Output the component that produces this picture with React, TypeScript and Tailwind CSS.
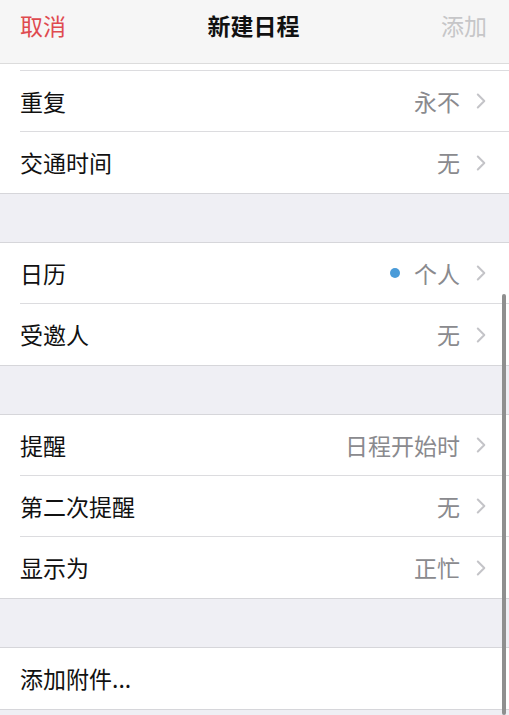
import React from "react";

const font = { fontFamily: '"Noto Sans CJK SC", "Noto Sans", sans-serif' };

function Chevron() {
  return (
    <svg width="10" height="16" viewBox="0 0 10 16" className="ml-[16px] shrink-0">
      <path d="M1.8 1.5 L8.3 8 L1.8 14.5" fill="none" stroke="#c4c4c8" strokeWidth="2" strokeLinecap="round" strokeLinejoin="round" />
    </svg>
  );
}

function Row({ label, value, dot, last, chevron = true }: { label: string; value?: string; dot?: boolean; last?: boolean; chevron?: boolean }) {
  return (
    <div className="pl-5 bg-white">
      <div className={`h-[61px] flex items-center pr-[23px] ${last ? "" : "border-b border-[#dcdcdf]"}`}>
        <span className="text-[23px] text-[#111] leading-none">{label}</span>
        <div className="flex-1" />
        {dot && <span className="w-[10px] h-[10px] rounded-full bg-[#4a9bd8] mr-[14px]" />}
        {value && <span className="text-[23px] text-[#8a8a8e] leading-none">{value}</span>}
        {chevron && <Chevron />}
      </div>
    </div>
  );
}

function Group({ children }: { children: React.ReactNode }) {
  return <div className="border-t border-b border-[#d6d6da] bg-white">{children}</div>;
}

export default function App() {
  return (
    <div style={font} className="relative w-[509px] h-[715px] overflow-hidden bg-[#efeff4]">
      <div className="h-[64px] bg-[#f6f6f6] border-b border-[#dcdcdc] flex items-start justify-between pl-5 pr-[22px] pt-[10px]">
        <span className="text-[23px] leading-[30px] text-[#df4a4f]">取消</span>
        <span className="text-[23px] leading-[30px] text-[#111] font-semibold">新建日程</span>
        <span className="text-[23px] leading-[30px] text-[#c6c6c8]">添加</span>
      </div>
      <div className="bg-white border-b border-[#d6d6da]">
        <div className="pl-5">
          <div className="h-[7px] border-b border-[#dcdcdf]" />
        </div>
        <Row label="重复" value="永不" />
        <Row label="交通时间" value="无" last />
      </div>
      <div className="h-[48px]" />
      <Group>
        <Row label="日历" value="个人" dot />
        <Row label="受邀人" value="无" last />
      </Group>
      <div className="h-[48px]" />
      <Group>
        <Row label="提醒" value="日程开始时" />
        <Row label="第二次提醒" value="无" />
        <Row label="显示为" value="正忙" last />
      </Group>
      <div className="h-[48px]" />
      <Group>
        <Row label="添加附件..." chevron={false} last />
      </Group>
      <div className="absolute right-[3px] top-[294px] bottom-0 w-[4px] rounded-full bg-[#8f8f8f]" />
    </div>
  );
}
